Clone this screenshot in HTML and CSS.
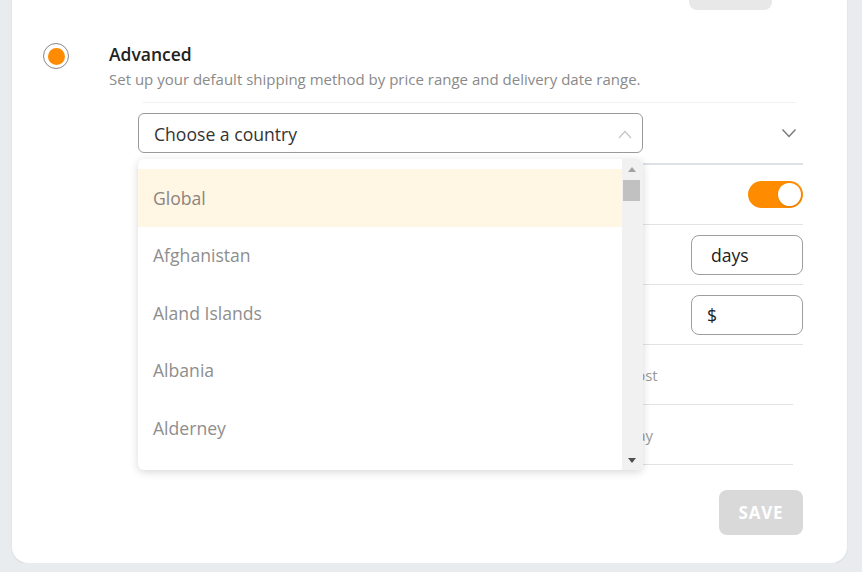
FILE: index.html
```html
<!DOCTYPE html>
<html lang="en">
<head>
<meta charset="utf-8">
<title>Shipping settings</title>
<link rel="stylesheet" href="styles.css">
</head>
<body>
<div class="card">
  <div class="top-actions">
    <button class="btn-ghost" type="button"></button>
  </div>

  <div class="option">
    <div class="radio"><span class="radio-dot"></span></div>
    <div class="option-body">
      <div class="option-title">Advanced</div>
      <div class="option-desc">Set up your default shipping method by price range and delivery date range.</div>

      <div class="panel">
        <div class="panel-divider"></div>
        <div class="panel-head">
          <div class="select">
            <span class="select-text">Choose a country</span>
            <svg class="select-caret" width="14" height="9" viewBox="0 0 14 9"><path d="M1 8 L7 1.5 L13 8" fill="none" stroke="#c4c4c4" stroke-width="1.2"/></svg>
          </div>
          <svg class="head-chevron" width="16" height="10" viewBox="0 0 16 10"><path d="M1.5 1.5 L8 8.5 L14.5 1.5" fill="none" stroke="#777" stroke-width="1.4"/></svg>

          <div class="dropdown">
            <ul class="dropdown-list">
              <li class="dropdown-item is-active">Global</li>
              <li class="dropdown-item">Afghanistan</li>
              <li class="dropdown-item">Aland Islands</li>
              <li class="dropdown-item">Albania</li>
              <li class="dropdown-item">Alderney</li>
            </ul>
            <div class="scrollbar">
              <span class="sb-arrow sb-up"></span>
              <span class="sb-thumb"></span>
              <span class="sb-space"></span>
              <span class="sb-arrow sb-down"></span>
            </div>
          </div>
        </div>

        <div class="row">
          <span class="toggle"><span class="toggle-knob"></span></span>
        </div>
        <div class="row">
          <span class="input"><span class="input-text">days</span></span>
        </div>
        <div class="row">
          <span class="input"><span class="input-text input-text-tight">$</span></span>
        </div>
        <div class="row row-narrow">
          <span class="row-text">cost</span>
        </div>
        <div class="row row-narrow">
          <span class="row-text row-text-b">day</span>
        </div>

        <div class="panel-foot">
          <button class="btn-save" type="button">SAVE</button>
        </div>
      </div>
    </div>
  </div>
</div>
</body>
</html>
```

FILE: styles.css
```css
* { box-sizing: border-box; }

html, body {
  margin: 0;
  padding: 0;
  background: #e9ecef;
  font-family: "Open Sans", "Noto Sans", sans-serif;
  overflow: hidden;
}

.card {
  margin: -50px 0 0 12px;
  width: 835px;
  background: #fff;
  border-radius: 16px;
  padding: 20px 44px 28px 31px;
  box-shadow: 0 1px 2px rgba(0,0,0,0.08);
}

.top-actions {
  display: flex;
  justify-content: flex-end;
  padding-right: 31px;
}

.btn-ghost {
  width: 83px;
  height: 40px;
  border: 0;
  border-radius: 8px;
  background: #e8e8e8;
}

.option {
  display: flex;
  gap: 40px;
  margin-top: 32px;
}

.radio {
  flex: 0 0 26px;
  width: 26px;
  height: 26px;
  border: 1.3px solid #888;
  border-radius: 50%;
  display: flex;
  align-items: center;
  justify-content: center;
  margin-top: 1px;
}

.radio-dot {
  width: 17px;
  height: 17px;
  border-radius: 50%;
  background: #ff8c00;
}

.option-body {
  flex: 1;
}

.option-title {
  font-size: 17.5px;
  font-weight: 600;
  color: #222;
  line-height: 24px;
}

.option-desc {
  font-size: 15px;
  color: #8a8a8a;
  line-height: 20px;
  margin-top: 3px;
}

.panel {
  margin: 13px 0 0 29px;
  width: 665px;
}

.panel-divider {
  height: 1px;
  margin: 0 7px 0 5px;
  background: #f1f1f1;
}

.panel-head {
  position: relative;
  display: flex;
  align-items: center;
  justify-content: space-between;
  padding: 10px 6px 10px 0;
  border-bottom: 2px solid #dde1e6;
}

.select {
  width: 505px;
  height: 40px;
  border: 1px solid #9a9a9a;
  border-radius: 6px;
  display: flex;
  align-items: center;
  justify-content: space-between;
  padding: 0 10px 0 15px;
}

.select-text {
  font-size: 17.6px;
  color: #333;
  margin-top: 1px;
}

.select-caret { margin-top: 2px; }

.head-chevron { margin-top: 0; }

.dropdown {
  position: absolute;
  left: 0;
  top: 56px;
  width: 505px;
  height: 311px;
  background: #fff;
  border-radius: 6px;
  box-shadow: 0 2px 8px rgba(0,0,0,0.16);
  display: flex;
  overflow: hidden;
  z-index: 5;
}

.dropdown-list {
  list-style: none;
  margin: 0;
  padding: 10px 0 0 0;
  flex: 1;
}

.dropdown-item {
  height: 57.5px;
  display: flex;
  align-items: center;
  padding-left: 15px;
  font-size: 17.6px;
  color: #8e8e8e;
}

.dropdown-item.is-active {
  background: #fff6e4;
  color: #8a8580;
}

.scrollbar {
  flex: 0 0 21px;
  background: #f1f1f1;
  display: flex;
  flex-direction: column;
  align-items: center;
  padding: 8px 2px 7px 0;
}

.sb-arrow {
  width: 0;
  height: 0;
  border-left: 4.5px solid transparent;
  border-right: 4.5px solid transparent;
}

.sb-up { border-bottom: 5px solid #a3a3a3; }
.sb-down { border-top: 5px solid #505050; }

.sb-thumb {
  width: 17px;
  height: 21px;
  background: #c1c1c1;
  margin-top: 8px;
}

.sb-space { flex: 1; }

.row {
  display: flex;
  align-items: center;
  justify-content: flex-end;
  height: 60px;
  border-bottom: 1px solid #e3e3e3;
  font-size: 15px;
  color: #999;
}

.row-narrow {
  margin-right: 10px;
  justify-content: flex-start;
}

.row-text {
  padding-left: 491px;
  color: #999;
  margin-top: 1px;
}

.row-text-b { padding-left: 490px; }

.toggle {
  width: 55px;
  height: 27px;
  border-radius: 14px;
  background: #ff8c00;
  display: flex;
  align-items: center;
  justify-content: flex-end;
  padding-right: 2px;
  margin-top: 0;
}

.toggle-knob {
  width: 23px;
  height: 23px;
  border-radius: 50%;
  background: #fff;
  box-shadow: 0 1px 2px rgba(0,0,0,0.15);
}

.input {
  width: 112px;
  height: 40px;
  border: 1px solid #9e9e9e;
  border-radius: 8px;
  display: flex;
  align-items: center;
  padding-left: 19px;
}

.input-text {
  font-size: 17.6px;
  color: #222;
}

.input-text-tight { margin-left: -4px; }

.panel-foot {
  display: flex;
  justify-content: flex-end;
  padding-top: 25px;
}

.btn-save {
  width: 84px;
  height: 45px;
  border: 0;
  border-radius: 8px;
  background: #d9d9d9;
  color: #fff;
  font-family: "Open Sans", "Noto Sans", sans-serif;
  font-size: 17px;
  font-weight: 700;
  letter-spacing: 0.8px;
}
```
